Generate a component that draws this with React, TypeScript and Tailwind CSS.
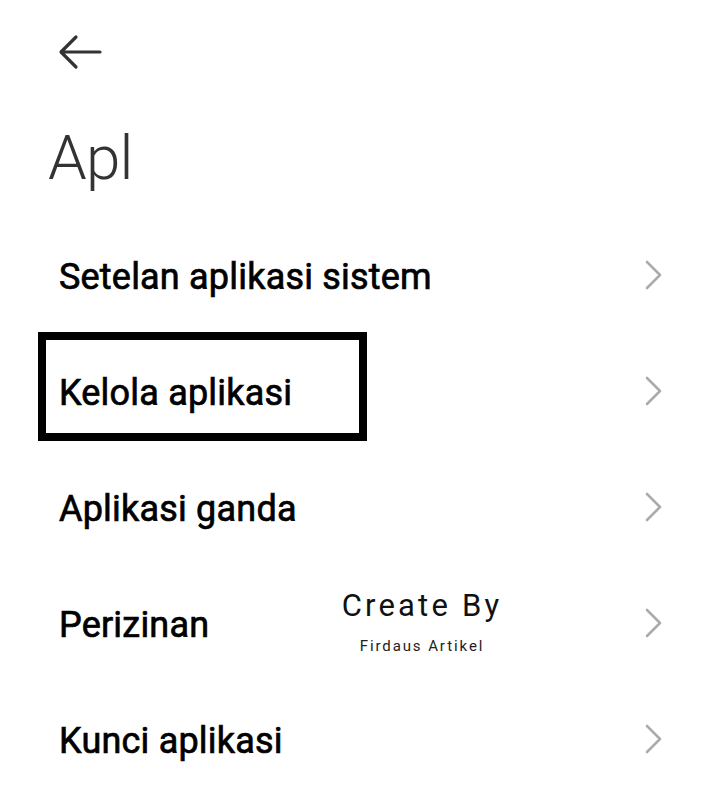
import React from "react";

const items = [
  "Setelan aplikasi sistem",
  "Kelola aplikasi",
  "Aplikasi ganda",
  "Perizinan",
  "Kunci aplikasi",
];

function Chevron() {
  return (
    <svg width="20" height="32" viewBox="0 0 20 32" fill="none">
      <path d="M3 3 L16 16 L3 29" stroke="#ababab" strokeWidth="2.6" strokeLinecap="round" strokeLinejoin="round" />
    </svg>
  );
}

export default function App() {
  return (
    <div className="w-[720px] h-[812px] bg-white overflow-hidden relative font-['Roboto','Noto_Sans',sans-serif]">
      <div className="pl-[58px] pt-[34px] h-[112px]">
        <svg width="44" height="36" viewBox="0 0 44 36" fill="none">
          <path d="M42 18 H4 M18 3 L3 18 L18 33" stroke="#333333" strokeWidth="3.2" strokeLinecap="round" strokeLinejoin="round" />
        </svg>
      </div>
      <div className="pl-[48px] h-[105px] text-[62px] font-light text-[#333333] leading-[92px] tracking-[-0.8px]">Apl</div>
      <div className="flex flex-col">
        {items.map((t, i) => (
          <div key={t} className="h-[116px] flex items-center justify-between pl-[59px] pr-[56px] relative">
            {i === 1 && (
              <div className="absolute left-[38px] top-[-1px] w-[329px] h-[109px] border-[8px] border-black"></div>
            )}
            <span className="text-[36px] font-normal text-black tracking-[0.2px] relative top-[2px] [-webkit-text-stroke:0.7px_black]">{t}</span>
            <Chevron />
            {i === 3 && (
              <div className="absolute left-[341px] top-[19px] flex flex-col items-center w-[162px]">
                <span className="text-[31px] text-[#111] tracking-[3.2px] leading-[44px]">Create By</span>
                <span className="text-[15px] text-[#222] tracking-[1.9px] leading-[20px] mt-[8px]">Firdaus Artikel</span>
              </div>
            )}
          </div>
        ))}
      </div>
    </div>
  );
}
